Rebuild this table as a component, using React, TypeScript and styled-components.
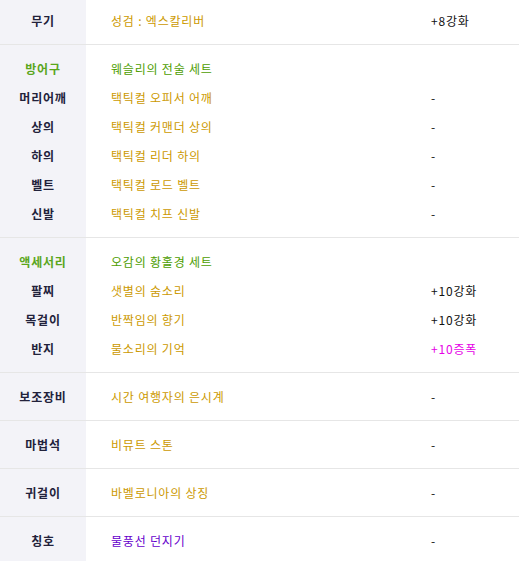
import React from 'react';
import styled, { createGlobalStyle } from 'styled-components';

const GlobalStyle = createGlobalStyle`
  html, body {
    margin: 0;
    padding: 0;
    background: #ffffff;
  }
  body {
    font-family: 'Noto Sans CJK KR', 'Noto Sans', sans-serif;
    font-size: 12px;
    letter-spacing: 0.8px;
  }
`;

const colors = {
  gold: '#cc9900',
  green: '#4d9d00',
  labelGreen: '#5aa61c',
  label: '#22223b',
  magenta: '#e600e6',
  purple: '#6600cc',
  value: '#111111',
  divider: '#e6e6e6',
  side: '#f3f3f8',
};

type Tone = 'gold' | 'green' | 'purple';
type ValueTone = 'plain' | 'magenta';

interface Row {
  label: string;
  labelGreen?: boolean;
  name: string;
  tone: Tone;
  value?: string;
  valueTone?: ValueTone;
}

const sections: Row[][] = [
  [{ label: '무기', name: '성검 : 엑스칼리버', tone: 'gold', value: '+8강화' }],
  [
    { label: '방어구', labelGreen: true, name: '웨슬리의 전술 세트', tone: 'green' },
    { label: '머리어깨', name: '택틱컬 오피서 어깨', tone: 'gold', value: '-' },
    { label: '상의', name: '택틱컬 커맨더 상의', tone: 'gold', value: '-' },
    { label: '하의', name: '택틱컬 리더 하의', tone: 'gold', value: '-' },
    { label: '벨트', name: '택틱컬 로드 벨트', tone: 'gold', value: '-' },
    { label: '신발', name: '택틱컬 치프 신발', tone: 'gold', value: '-' },
  ],
  [
    { label: '액세서리', labelGreen: true, name: '오감의 황홀경 세트', tone: 'green' },
    { label: '팔찌', name: '샛별의 숨소리', tone: 'gold', value: '+10강화' },
    { label: '목걸이', name: '반짝임의 향기', tone: 'gold', value: '+10강화' },
    { label: '반지', name: '물소리의 기억', tone: 'gold', value: '+10증폭', valueTone: 'magenta' },
  ],
  [{ label: '보조장비', name: '시간 여행자의 은시계', tone: 'gold', value: '-' }],
  [{ label: '마법석', name: '비뮤트 스톤', tone: 'gold', value: '-' }],
  [{ label: '귀걸이', name: '바벨로니아의 상징', tone: 'gold', value: '-' }],
  [{ label: '칭호', name: '물풍선 던지기', tone: 'purple', value: '-' }],
];

const Table = styled.div`
  width: 519px;
  display: flex;
  flex-direction: column;
`;

const Section = styled.div<{ $first?: boolean; $last?: boolean }>`
  display: flex;
  flex-direction: column;
  padding: ${({ $first }) => ($first ? '6px 0 9px' : '9px 0')};
  border-bottom: ${({ $last }) => ($last ? 'none' : `1px solid ${colors.divider}`)};
  background: linear-gradient(to right, ${colors.side} 86px, #ffffff 86px);
`;

const RowLine = styled.div`
  display: grid;
  grid-template-columns: 86px 345px 1fr;
  height: 29px;
  align-items: center;
  line-height: 29px;
`;

const Label = styled.div<{ $green?: boolean }>`
  text-align: center;
  font-weight: 700;
  color: ${({ $green }) => ($green ? colors.labelGreen : colors.label)};
`;

const Name = styled.div<{ $tone: Tone }>`
  padding-left: 25px;
  color: ${({ $tone }) => colors[$tone]};
  white-space: nowrap;
`;

const Value = styled.div<{ $tone: ValueTone }>`
  color: ${({ $tone }) => ($tone === 'magenta' ? colors.magenta : colors.value)};
  white-space: nowrap;
`;

export default function App() {
  return (
    <>
      <GlobalStyle />
      <Table>
        {sections.map((rows, i) => (
          <Section key={i} $first={i === 0} $last={i === sections.length - 1}>
            {rows.map((row) => (
              <RowLine key={row.label}>
                <Label $green={row.labelGreen}>{row.label}</Label>
                <Name $tone={row.tone}>{row.name}</Name>
                <Value $tone={row.valueTone ?? 'plain'}>{row.value ?? ''}</Value>
              </RowLine>
            ))}
          </Section>
        ))}
      </Table>
    </>
  );
}
